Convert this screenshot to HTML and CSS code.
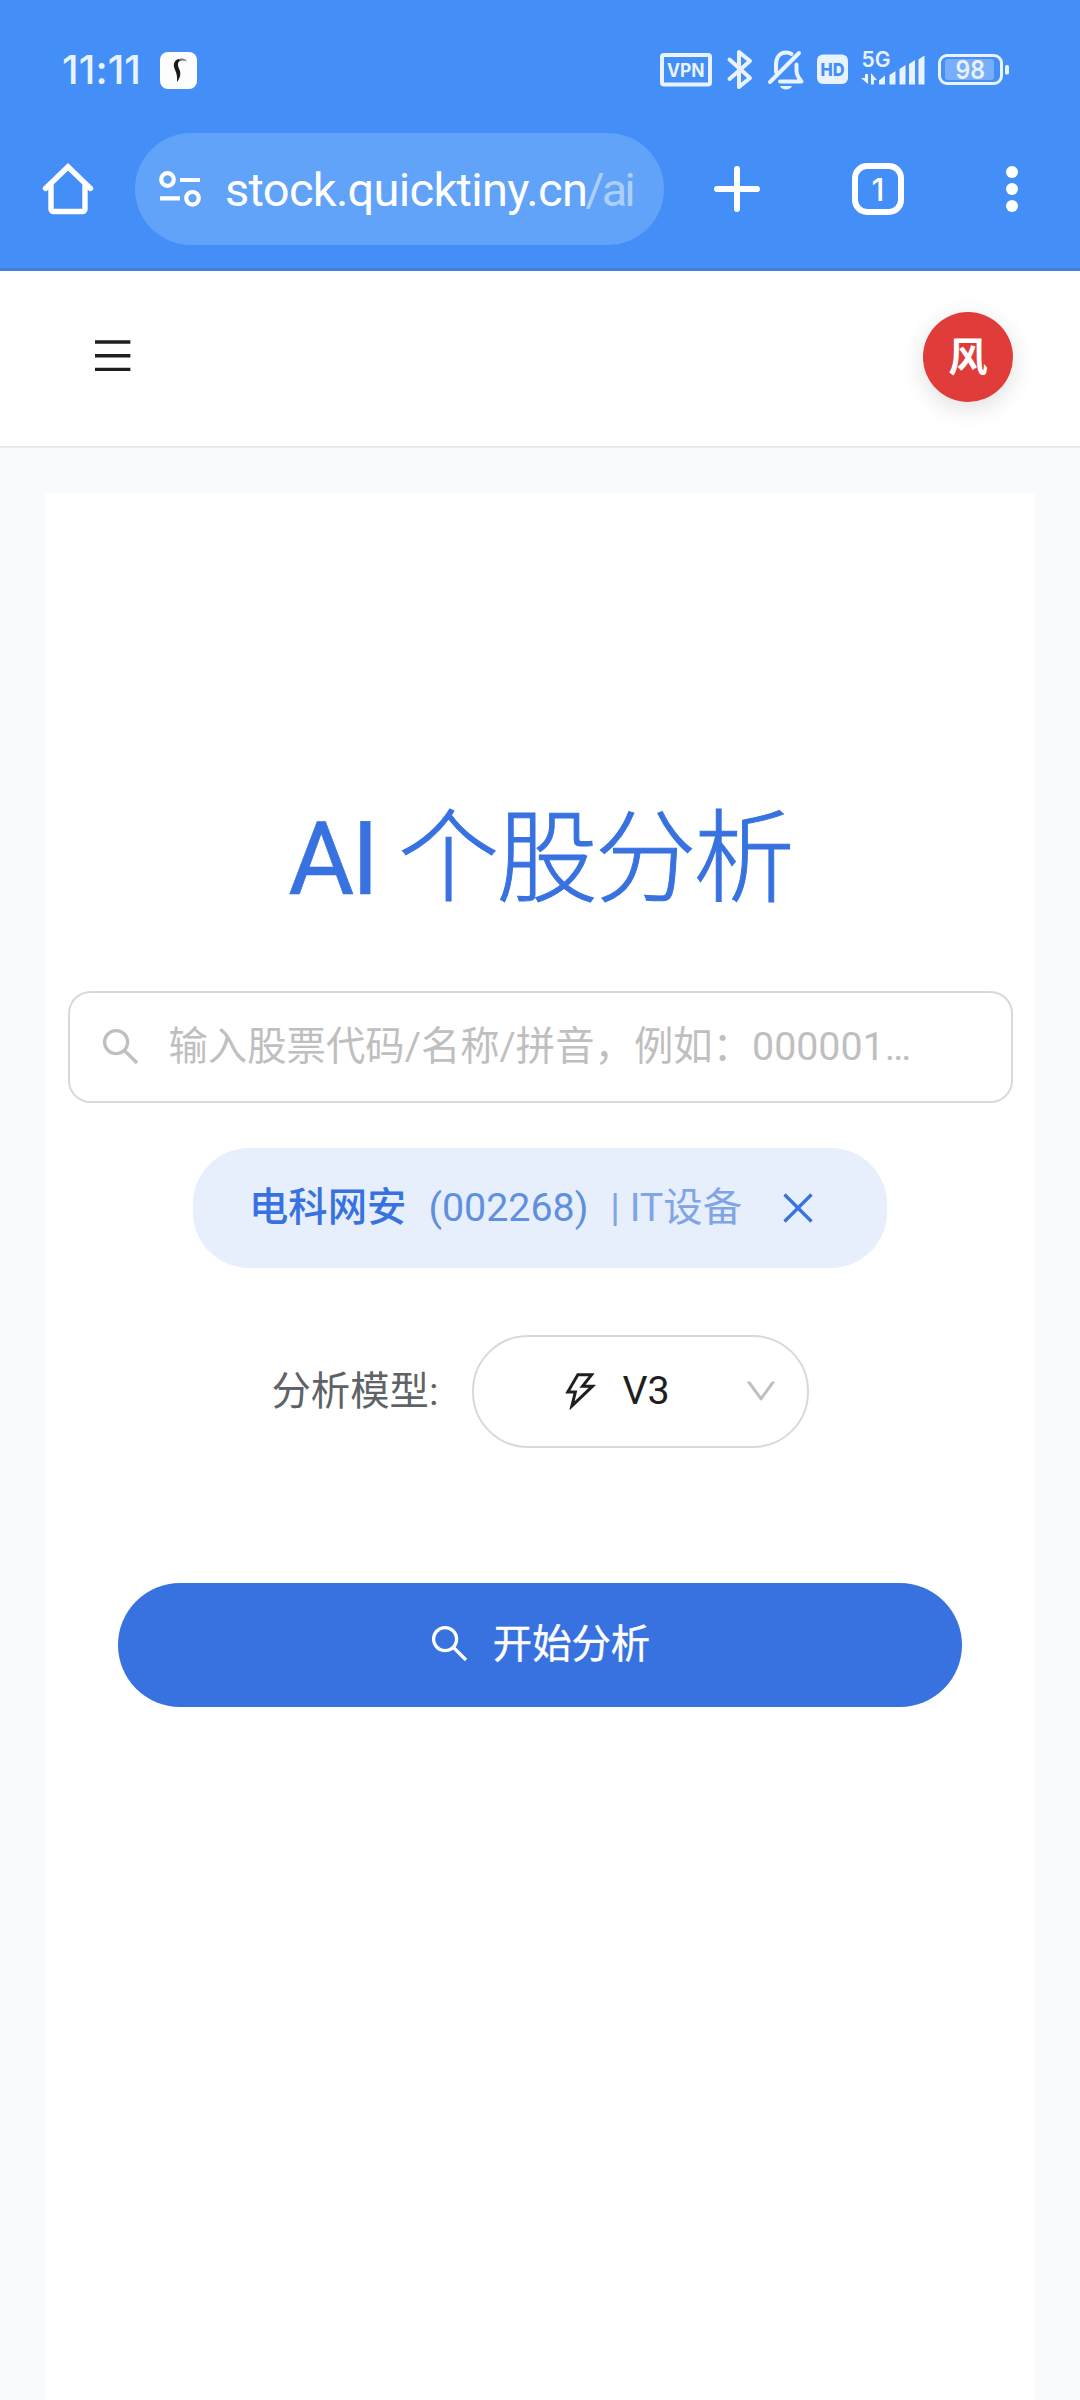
FILE: index.html
```html
<!DOCTYPE html>
<html lang="zh-CN">
<head>
<meta charset="utf-8">
<title>AI 个股分析</title>
<link rel="stylesheet" href="styles.css">
</head>
<body>
<div class="browser">
  <div class="status">
    <span class="clock">11:11</span>
    <svg class="app-badge" width="37" height="37" viewBox="0 0 37 37"><rect width="37" height="37" rx="8" fill="#fdfdfd"/><path d="M17 8.500c3-3 8-2.500 10 1-4-1.500-6-1-8 .5z" fill="#777"/><path d="M19 7c-5 1-6 5.500-4.500 9.500 1.500 4 3 6 2.500 13.500 4-5 4-9.500 2-13.500-1.500-3.500-1.500-5 .5-8z" fill="#1b1b1b"/></svg>
    <div class="status-icons">
      <svg width="350" height="60" viewBox="660 40 350 60" fill="#e8f3ff">
        <rect x="662" y="55" width="48" height="29.500" rx="2" fill="none" stroke="#e8f3ff" stroke-width="4"/>
        <text x="667" y="76.500" class="t-vpn" textLength="37.500" lengthAdjust="spacingAndGlyphs">VPN</text>
        <path d="M729.500 59.500 750 78l-11 9V52l11 9-20.500 18" fill="none" stroke="#e8f3ff" stroke-width="4" stroke-linejoin="round" stroke-linecap="round"/>
        <g fill="none" stroke="#e8f3ff" stroke-width="4" stroke-linecap="round" stroke-linejoin="round">
          <path d="M770 82 799 53"/>
          <path d="M776 72V65c0-8 4-12.500 10-12.500 2 0 4 .5 5.500 1.500M780 81.500h21.500c-3-4-5-6-5-11v-6"/>
        </g>
        <path d="M780 86h12c-1.500 4.500-10.500 4.500-12 0z"/>
        <rect x="817" y="54.500" width="31" height="29.500" rx="6"/>
        <text x="820.500" y="75.500" class="t-hd" fill="#448ef7" textLength="24" lengthAdjust="spacingAndGlyphs">HD</text>
        <text x="861.500" y="67" class="t-5g" textLength="29" lengthAdjust="spacingAndGlyphs">5G</text>
        <path d="M865 74h3v10l-7-6h4zM871 84.500V73l6 7h-3v4.500z"/>
        <path d="M879 84.500v-4l6-5v9zM889.500 84.500V75l6-4v13.500zM899.500 84.500V69l6-4v19.500zM909 84.500V64l6-4v24.500zM918.500 84.500v-25l6-4v29z"/>
        <rect x="939.500" y="55.500" width="62" height="28" rx="7.500" fill="none" stroke="#e8f3ff" stroke-width="3"/>
        <rect x="945" y="59" width="49" height="21" rx="3" fill="#78aef9"/>
        <text x="955.500" y="79" class="t-bat" textLength="29.500" lengthAdjust="spacingAndGlyphs">98</text>
        <rect x="1005" y="65" width="4" height="9.500" rx="1.500"/>
      </svg>
    </div>
  </div>
  <div class="toolbar">
    <svg width="52" height="52" viewBox="0 0 52 52" fill="none" stroke="#fff" stroke-width="5.400" stroke-linecap="round" stroke-linejoin="miter"><path d="M3.500 25.500 26 3.800 48.500 25.500M9 22v24a2.500 2.500 0 0 0 2.500 2.500h29a2.500 2.500 0 0 0 2.500-2.500V22"/></svg>
    <div class="omnibox">
      <svg width="44" height="38" viewBox="0 0 44 38" fill="none" stroke="#fff" stroke-width="4.200"><circle cx="9.500" cy="9.500" r="6.300"/><circle cx="34.500" cy="28.300" r="6.300"/><path d="M22 10h20M2 28.300h20"/></svg>
      <span class="url">stock.quicktiny.cn<span class="path">/ai</span></span>
    </div>
    <svg class="plus" width="46" height="46" viewBox="0 0 46 46" stroke="#fff" stroke-width="6" stroke-linecap="round"><path d="M3 23h40M23 3v40"/></svg>
    <span class="tabs">1</span>
    <svg class="dots" width="12" height="46" viewBox="0 0 12 46" fill="#fff"><circle cx="6" cy="6" r="6"/><circle cx="6" cy="23" r="6"/><circle cx="6" cy="40" r="6"/></svg>
  </div>
</div>
<header class="header">
  <svg width="36" height="32" viewBox="0 0 36 32" fill="#1f1f1f"><path d="M0 .3h35.400v3.400H0zM0 14h35.400v3.400H0zM0 27.700h35.400v3.400H0z"/></svg>
  <span class="avatar">风</span>
</header>
<main class="main">
  <section class="card">
    <h1 class="title"><span class="latin">AI</span> 个股分析</h1>
    <div class="search">
      <svg width="45" height="45" viewBox="0 0 1024 1024" fill="#bfbfbf"><path d="M909.600 854.500L649.900 594.800C690.200 542.700 712 479 712 412c0-80.200-31.300-155.400-87.900-212.100-56.600-56.700-132-87.900-212.100-87.900s-155.500 31.300-212.100 87.900C143.200 256.500 112 331.800 112 412c0 80.100 31.300 155.500 87.900 212.100C256.500 680.800 331.800 712 412 712c67 0 130.600-21.800 182.700-62l259.700 259.600a8.200 8.200 0 0011.600 0l43.600-43.500a8.200 8.200 0 000-11.600zM570.400 570.400C528 612.700 471.800 636 412 636s-116-23.300-158.400-65.600C211.300 528 188 471.800 188 412s23.300-116.100 65.600-158.400C296 211.300 352.200 188 412 188s116.100 23.200 158.400 65.600S636 352.200 636 412s-23.300 116.100-65.600 158.400z"/></svg>
      <span class="placeholder">输入股票代码/名称/拼音，例如：000001…</span>
    </div>
    <div class="tag">
      <span class="name">电科网安</span>
      <span class="code">(002268)</span>
      <span class="sector">| IT设备</span>
      <svg width="30" height="30" viewBox="0 0 30 30" stroke="#3872e0" stroke-width="3.300"><path d="M1.500 1.500l27 27M28.500 1.500l-27 27"/></svg>
    </div>
    <div class="model">
      <span class="label">分析模型:</span>
      <div class="select">
        <svg width="45" height="45" viewBox="0 0 1024 1024" fill="#1f1f1f"><path d="M848 359.300H627.700L825.800 109c4.100-5.300.4-13-6.300-13H436c-2.800 0-5.500 1.500-6.900 4L170 547.500c-3.100 5.300.7 12 6.900 12h174.400l-89.400 357.600c-1.900 7.800 7.500 13.300 13.300 7.700L853.500 373c5.200-4.900 1.700-13.700-5.500-13.700zM378.200 732.500l60.300-241H281.100l189.600-327.400h224.600L487 427.400h211L378.200 732.500z"/></svg>
        <span class="value">V3</span>
        <svg class="arrow" width="38" height="38" viewBox="0 0 1024 1024" fill="#bfbfbf"><path d="M884 256h-75c-5.100 0-9.900 2.500-12.900 6.600L512 654.200 227.900 262.600c-3-4.100-7.800-6.600-12.900-6.600h-75c-6.500 0-10.300 7.400-6.500 12.700l352.600 486.100c12.800 17.600 39 17.600 51.700 0l352.600-486.100c3.900-5.300.1-12.700-6.400-12.700z"/></svg>
      </div>
    </div>
    <div class="submit">
      <svg width="45" height="45" viewBox="0 0 1024 1024" fill="#fff"><path d="M909.600 854.500L649.900 594.800C690.200 542.700 712 479 712 412c0-80.200-31.300-155.400-87.900-212.100-56.600-56.700-132-87.900-212.100-87.900s-155.500 31.300-212.100 87.900C143.200 256.500 112 331.800 112 412c0 80.100 31.300 155.500 87.900 212.100C256.500 680.800 331.800 712 412 712c67 0 130.600-21.800 182.700-62l259.700 259.600a8.200 8.200 0 0011.600 0l43.600-43.500a8.200 8.200 0 000-11.600zM570.400 570.400C528 612.700 471.800 636 412 636s-116-23.300-158.400-65.600C211.300 528 188 471.800 188 412s23.300-116.100 65.600-158.400C296 211.300 352.200 188 412 188s116.100 23.200 158.400 65.600S636 352.200 636 412s-23.300 116.100-65.600 158.400z"/></svg>
      <span class="submit-text">开始分析</span>
    </div>
  </section>
</main>
</body>
</html>
```

FILE: styles.css
```css
* { box-sizing: border-box; }
body {
  margin: 0;
  width: 1080px;
  height: 2400px;
  overflow: hidden;
  display: flex;
  flex-direction: column;
  background: #f8fafc;
  font-family: Roboto, "Noto Sans CJK SC", sans-serif;
  font-size: 39.375px;
  line-height: 60px;
}
svg { display: block; flex: none; }

.browser {
  height: 271px;
  background: #448ef7;
  border-bottom: 3px solid #4180d8;
}
.status {
  display: flex;
  align-items: center;
  height: 140px;
  margin-bottom: -7px;
  padding: 0 70px 0 62px;
}
.clock {
  width: 98px;
  font: 500 40px/48px Inter, sans-serif;
  letter-spacing: 0.100px;
  color: #e8f3ff;
}
.status-icons { margin-left: auto; }
.t-vpn { font: 700 19px Inter, sans-serif; }
.t-hd { font: 800 18px Inter, sans-serif; }
.t-5g { font: 600 21.500px Inter, sans-serif; }
.t-bat { font: 600 26px Inter, sans-serif; }

.toolbar {
  display: flex;
  align-items: center;
  height: 112px;
  padding-left: 42px;
}
.omnibox {
  display: flex;
  align-items: center;
  width: 529px;
  height: 112px;
  margin-left: 41px;
  padding-left: 23px;
  border-radius: 56px;
  background: #60a3f8;
}
.url {
  margin-left: 23px;
  padding-top: 2px;
  color: #fff;
  font-size: 47px;
  letter-spacing: -0.700px;
  white-space: nowrap;
}
.path { margin-left: -2px; color: #acd0fb; letter-spacing: -2.900px; }
.plus { margin-left: 50px; }
.tabs {
  width: 52px;
  height: 52px;
  margin-left: 92px;
  border: 6px solid #fff;
  border-radius: 15px;
  color: #fff;
  font: 500 31px/41px Inter, sans-serif;
  text-align: center;
}
.dots { margin-left: 102px; }

.header {
  display: flex;
  align-items: center;
  justify-content: space-between;
  height: 177px;
  padding: 0 67px 5px 95px;
  background: #fff;
  border-bottom: 2px solid #e8eaed;
}
.avatar {
  width: 90px;
  height: 90px;
  margin-top: 2px;
  border-radius: 50%;
  background: #e03c39;
  box-shadow: 0 6px 24px rgba(0, 0, 0, 0.13);
  color: #fff;
  font-weight: 700;
  line-height: 92px;
  text-align: center;
}

.main { flex: 1; padding: 45px 45px 0; }
.card {
  display: flex;
  flex-direction: column;
  align-items: center;
  height: 100%;
  padding: 297px 22px 0;
  background: #fff;
}
.title {
  height: 140px;
  margin: 0;
  color: #3872e0;
  font-size: 101.250px;
  line-height: 140px;
  font-weight: 300;
  letter-spacing: -2.800px;
  white-space: nowrap;
  -webkit-text-stroke: 1px #3872e0;
}
.latin { font-weight: 400; -webkit-text-stroke: 0.600px #3872e0; }
.search {
  display: flex;
  align-items: center;
  width: 945px;
  height: 112px;
  margin-top: 61px;
  padding: 0 0 2px 28px;
  border: 2px solid #d9d9d9;
  border-radius: 22.500px;
  color: #bfbfbf;
}
.placeholder { margin-left: 26px; padding-top: 1px; white-space: nowrap; }
.tag {
  display: flex;
  align-items: center;
  width: 694px;
  height: 120px;
  margin-top: 45px;
  padding: 0 0 1px 56px;
  border-radius: 56px;
  background: #e7effd;
  color: #3872e0;
  white-space: nowrap;
}
.name { font-weight: 500; }
.code { margin-left: 22px; color: #5f8fdd; }
.sector { margin-left: 22px; color: #7fa5e6; }
.tag svg { margin-left: 41px; }
.model {
  display: flex;
  align-items: center;
  margin-top: 67px;
}
.label { width: 200px; color: #5f6368; white-space: nowrap; }
.select {
  display: flex;
  align-items: center;
  width: 337px;
  height: 113px;
  padding: 0 0 1px 84px;
  border: 2px solid #d9d9d9;
  border-radius: 56px;
  color: #1f1f1f;
}
.value { margin-left: 20px; }
.arrow { margin-left: 72px; }
.submit {
  display: flex;
  align-items: center;
  justify-content: center;
  gap: 21px;
  width: 844px;
  height: 124px;
  margin-top: 135px;
  padding: 0 3px 3px 0;
  border-radius: 62px;
  background: #3872e0;
  color: #fff;
  -webkit-text-stroke: 0.400px #fff;
}
.submit-text { padding-top: 3px; }
```
